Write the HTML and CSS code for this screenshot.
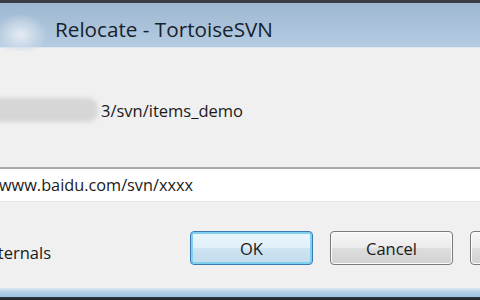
FILE: index.html
```html
<!DOCTYPE html>
<html lang="en">

<head>
  <meta charset="UTF-8">
  <title>Relocate - TortoiseSVN</title>
  <link rel="stylesheet" href="styles.css">
</head>

<body>

  <div class="window">
    <div class="frame-top"></div>

    <div class="titlebar">
      <div class="app-icon"></div>
      <span class="title">Relocate - TortoiseSVN</span>
    </div>

    <div class="content">
      <div class="from-row">
        <div class="masked"></div>
        <span class="from-url">3/svn/items_demo</span>
      </div>

      <div class="to-field">
        <span class="to-url">www.baidu.com/svn/xxxx</span>
      </div>

      <div class="footer">
        <div class="check">
          <span class="check-label">Externals</span>
        </div>
        <div class="buttons">
          <button class="btn btn-default">OK</button>
          <button class="btn">Cancel</button>
          <button class="btn">Help</button>
        </div>
      </div>
    </div>

    <div class="frame-bottom"></div>
  </div>

</body>

</html>
```

FILE: styles.css
```css
body {
  margin: 0;
  font-family: "Open Sans", "Noto Sans", sans-serif;
  background-color: #f0f0f0;
}

.window {
  width: 480px;
  height: 300px;
  display: flex;
  flex-direction: column;
  overflow: hidden;
  background-color: #f0f0f0;
}

.frame-top {
  height: 3px;
  background-color: #3b3f44;
}

.titlebar {
  height: 44px;
  display: flex;
  align-items: center;
  padding-left: 55px;
  position: relative;
  background: linear-gradient(to bottom, #9fb8d1 0%, #a9c2da 50%, #b4cce2 100%);
  border-bottom: 1px solid #dde7f0;
}

.app-icon {
  position: absolute;
  left: 0;
  top: 12px;
  width: 46px;
  height: 36px;
  background: radial-gradient(ellipse at 45% 55%, rgba(235, 240, 246, 0.9) 0%, rgba(210, 222, 234, 0.6) 45%, rgba(180, 200, 222, 0) 75%);
}

.title {
  font-size: 20.7px;
  color: #17212c;
  margin-top: 8px;
}

.content {
  flex: 1;
  display: flex;
  flex-direction: column;
}

.from-row {
  display: flex;
  align-items: center;
  margin-top: 49px;
  height: 26px;
}

.masked {
  width: 102px;
  height: 24px;
  background-color: #d6d6d6;
  filter: blur(2px);
  margin-left: -4px;
  border-radius: 0 10px 10px 0;
}

.from-url {
  font-size: 16.5px;
  color: #1a1a1a;
  margin-left: 3px;
}

.to-field {
  margin-top: 44px;
  height: 32px;
  background-color: #ffffff;
  border-top: 2px solid #a9a9a9;
  border-bottom: 1px solid #e4e4e4;
  display: flex;
  align-items: center;
}

.to-url {
  font-size: 16.3px;
  color: #1a1a1a;
  margin-left: -1px;
}

.footer {
  display: flex;
  align-items: center;
  margin-top: 29px;
  height: 34px;
}

.check {
  width: 190px;
  flex-shrink: 0;
  padding-top: 9px;
}

.check-label {
  font-size: 16.5px;
  color: #1a1a1a;
  margin-left: -20px;
}

.buttons {
  display: flex;
  gap: 17px;
}

.btn {
  width: 123px;
  height: 34px;
  flex-shrink: 0;
  font-family: inherit;
  font-size: 16.5px;
  color: #1a1a1a;
  border: 1px solid #7a7a7a;
  border-radius: 4px;
  background: linear-gradient(to bottom, #f6f6f6 0%, #ececec 48%, #dddddd 52%, #d2d2d2 100%);
  box-shadow: inset 0 0 0 1px #fbfbfb;
  padding: 0;
}

.btn-default {
  border-color: #3a7ab0;
  box-shadow: inset 0 0 0 2px #7fd0ee;
  background: linear-gradient(to bottom, #eaf6fc 0%, #e1eff8 48%, #cde4f2 52%, #c3dcec 100%);
}

.frame-bottom {
  height: 12px;
  margin-top: auto;
  background: linear-gradient(to bottom, #d9e7f2 0%, #aecde6 40%, #9fc3e0 75%, #2f3a44 75%, #1d242b 100%);
}
```
